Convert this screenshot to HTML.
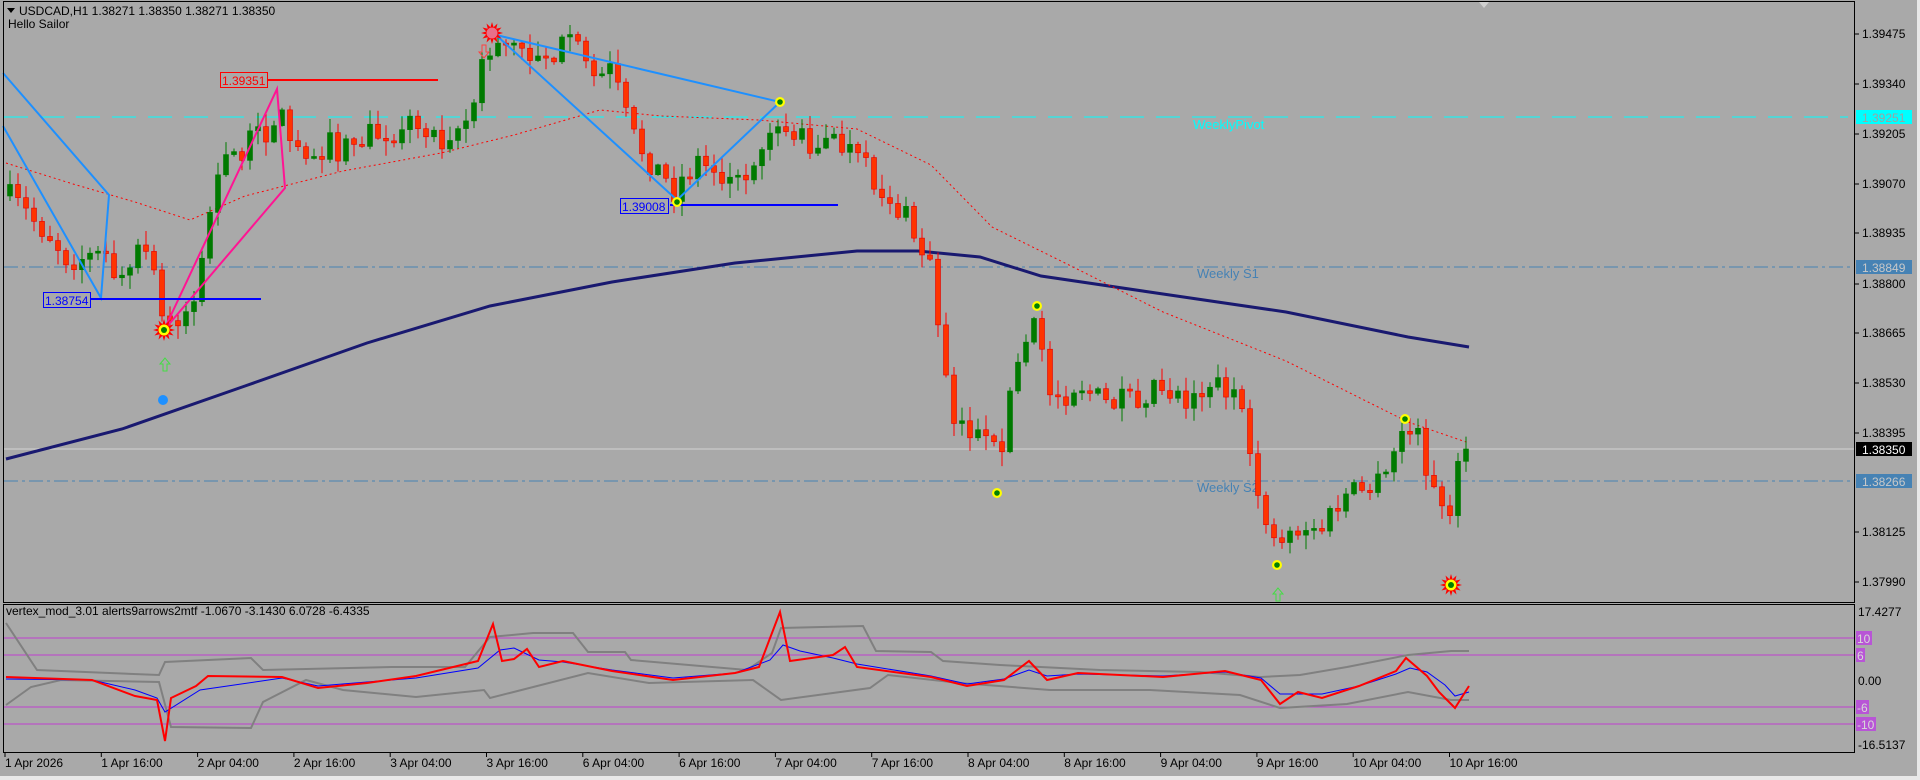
<!DOCTYPE html>
<html><head><meta charset="utf-8"><style>
html,body{margin:0;padding:0;background:#a9a9a9;overflow:hidden}
svg{display:block}
text{font-family:"Liberation Sans",sans-serif}
</style></head><body>
<svg id="s" width="1920" height="780" xmlns="http://www.w3.org/2000/svg">
<rect x="0" y="0" width="1920" height="780" fill="#a9a9a9"/>
<rect x="1917" y="0" width="3" height="780" fill="#e8e8e8"/>
<rect x="0" y="776" width="1920" height="4" fill="#e8e8e8"/>
<g id="lines"></g>
<g id="cand"></g>
<g id="over"></g>
<rect x="3.5" y="1.5" width="1851" height="601" fill="none" stroke="#000" stroke-width="1"/>
<rect x="3.5" y="604.5" width="1851" height="148" fill="none" stroke="#000" stroke-width="1"/>
<polygon points="1479,2 1489,2 1484,8" fill="#d0d0d0"/>
<polygon points="7,8 15,8 11,13" fill="#000"/>
<text x="19" y="15" font-size="12" fill="#000">USDCAD,H1  1.38271 1.38350 1.38271 1.38350</text>
<text x="8" y="28" font-size="12" fill="#000">Hello Sailor</text>
<text x="6" y="615" font-size="12" fill="#000">vertex_mod_3.01 alerts9arrows2mtf -1.0670 -3.1430 6.0728 -6.4335</text>
<g font-size="12" fill="#000" id="axis"></g>
</svg>
<script>
(function(){
var NS="http://www.w3.org/2000/svg";
function el(p,t,a){var e=document.createElementNS(NS,t);for(var k in a)e.setAttribute(k,a[k]);p.appendChild(e);return e;}
function txt(p,x,y,s,a){var e=el(p,'text',Object.assign({x:x,y:y},a||{}));e.textContent=s;return e;}
var L=document.getElementById('lines'),C=document.getElementById('cand'),O=document.getElementById('over'),A=document.getElementById('axis');
function pl(p,pts,a){el(p,'polyline',Object.assign({points:pts.map(function(q){return q.join(',')}).join(' '),fill:'none'},a));}
el(L,'line',{x1:4,y1:117,x2:1848,y2:117,stroke:'#00ffff','stroke-dasharray':'24,12'});
el(L,'line',{x1:4,y1:267,x2:1854,y2:267,stroke:'#4682b4','stroke-dasharray':'14,4,3,4'});
el(L,'line',{x1:4,y1:481,x2:1854,y2:481,stroke:'#4682b4','stroke-dasharray':'14,4,3,4'});
el(L,'line',{x1:4,y1:449,x2:1854,y2:449,stroke:'#d3d3d3'});
txt(L,1193,129,'WeeklyPivot',{'font-size':'13',fill:'#00ffff'});
txt(L,1197,278,'Weekly S1',{'font-size':'13',fill:'#4682b4'});
txt(L,1197,492,'Weekly S2',{'font-size':'13',fill:'#4682b4'});
[638,655,707,724].forEach(function(y){el(L,'line',{x1:4,y1:y,x2:1854,y2:y,stroke:'#c040d0'});});
var kp=[[6,196],[49,233],[67,257],[104,257],[122,282],[147,245],[163,325],[196,300],[214,184],[239,147],[263,135],[279,110],[294,147],[343,147],[404,122],[441,135],[471,116],[484,61],[496,47],[527,51],[576,49],[612,73],[631,135],[673,190],[698,159],[741,184],[771,122],[808,141],[845,147],[876,184],[906,220],[931,269],[943,355],[955,416],[980,441],[998,459],[1016,367],[1038,324],[1053,404],[1078,380],[1102,404],[1127,404],[1157,380],[1188,398],[1212,380],[1237,392],[1249,465],[1274,539],[1298,527],[1322,527],[1347,496],[1384,484],[1402,429],[1420,441],[1433,490],[1445,527],[1457,471],[1469,449]];
function interp(k,x){for(var i=1;i<k.length;i++){if(x<=k[i][0]){var a=k[i-1],b=k[i];return a[1]+(b[1]-a[1])*(x-a[0])/(b[0]-a[0]);}}return k[k.length-1][1];}
var seed=7;function rnd(){seed=(seed*16807)%2147483647;return (seed-1)/2147483646;}
var prev=interp(kp,6);
for(var x=10;x<=1469;x+=8){
 var c=interp(kp,x)+(rnd()-0.5)*30; if(x>=1465)c=449;
 var o=prev; if(Math.abs(c-o)<1.5)c=o+(rnd()<.5?-2:2);
 var bt=Math.min(o,c),bb=Math.max(o,c);
 var hi=bt-rnd()*14-1,lo=bb+rnd()*14+1;
 var bull=c<o;var col=bull?'#007a00':'#ff3300',bc=bull?'#007a00':'#e00000';
 el(C,'line',{x1:x,y1:hi,x2:x,y2:lo,stroke:bull?'#007a00':'#ff0000'});
 el(C,'rect',{x:x-2.5,y:bt,width:5,height:Math.max(1,bb-bt),fill:col,stroke:bc,'stroke-width':0.6});
 prev=c;
}
pl(L,[[6,459],[122,429],[245,386],[367,343],[490,306],[612,282],[735,263],[857,251],[918,251],[980,257],[1041,276],[1163,294],[1286,312],[1408,337],[1469,347]],{stroke:'#191970','stroke-width':3});
pl(L,[[6,163],[73,184],[135,202],[190,220],[245,196],[343,171],[441,153],[514,135],[600,110],[661,116],[759,120],[857,129],[931,165],[992,227],[1065,263],[1163,312],[1286,361],[1408,422],[1469,443]],{stroke:'#ff0000','stroke-dasharray':'2,3'});
pl(O,[[3,73],[109,195],[101,298],[3,126]],{stroke:'#1e90ff','stroke-width':2});
pl(O,[[496,35],[780,102],[677,200],[496,35]],{stroke:'#1e90ff','stroke-width':2});
pl(O,[[164,330],[277,89],[285,188],[164,330]],{stroke:'#ff1493','stroke-width':2});
el(O,'line',{x1:267,y1:80,x2:438,y2:80,stroke:'#ff0000','stroke-width':2});
el(O,'rect',{x:220.5,y:72.5,width:47,height:15,fill:'#a9a9a9',stroke:'#ff0000'});
txt(O,222,85,'1.39351',{'font-size':'12',fill:'#ff0000'});
el(O,'line',{x1:91,y1:299,x2:261,y2:299,stroke:'#0000ff','stroke-width':2});
el(O,'rect',{x:43.5,y:292.5,width:47,height:15,fill:'#a9a9a9',stroke:'#0000ff'});
txt(O,45,305,'1.38754',{'font-size':'12',fill:'#0000ff'});
el(O,'line',{x1:670,y1:205,x2:838,y2:205,stroke:'#0000ff','stroke-width':2});
el(O,'rect',{x:620.5,y:198.5,width:48,height:15,fill:'#a9a9a9',stroke:'#0000ff'});
txt(O,622,211,'1.39008',{'font-size':'12',fill:'#0000ff'});
function star(cx,cy,center){var p=[];for(var i=0;i<24;i++){var r=i%2?6:11,a=i*Math.PI/12;p.push([cx+r*Math.cos(a),cy+r*Math.sin(a)]);}
 el(O,'polygon',{points:p.map(function(q){return q.join(',')}).join(' '),fill:'#ff0000'});
 el(O,'circle',{cx:cx,cy:cy,r:5.5,fill:center});}
star(164,330,'#ffff00');el(O,'circle',{cx:164,cy:330,r:3,fill:'#008000'});
star(492,33,'#e8708a');
star(1451,585,'#ffff00');el(O,'circle',{cx:1451,cy:585,r:3,fill:'#008000'});
function ydot(cx,cy){el(O,'circle',{cx:cx,cy:cy,r:5,fill:'#ffff00'});el(O,'circle',{cx:cx,cy:cy,r:2.8,fill:'#008000'});}
[[780,102],[1037,306],[997,493],[1277,565],[1405,419],[677,202]].forEach(function(p){ydot(p[0],p[1]);});
el(O,'circle',{cx:163,cy:400,r:5,fill:'#1e90ff'});
function arrowUp(cx,cy,col){el(O,'path',{d:'M'+cx+','+(cy-7)+' l-5,6 h3 v7 h4 v-7 h3 z',fill:'none',stroke:col});}
arrowUp(165,365,'#44dd44');arrowUp(1278,595,'#44dd44');
el(O,'path',{d:'M484,58 l-5,-6 h3 v-7 h4 v7 h3 z',fill:'none',stroke:'#ff4040'});
pl(L,[[6,623],[37,670],[159,675],[165,662],[251,658],[263,670],[392,667],[465,667],[490,637],[533,633],[573,633],[588,652],[625,652],[631,660],[747,670],[772,653],[781,628],[863,626],[876,651],[931,652],[943,661],[1000,665],[1100,670],[1200,672],[1261,677],[1300,675],[1347,667],[1408,655],[1451,651],[1469,651]],{stroke:'#808080','stroke-width':2});
pl(L,[[6,705],[31,687],[61,680],[159,682],[171,727],[251,728],[263,702],[306,680],[343,690],[416,697],[484,690],[490,698],[588,673],[649,683],[753,680],[781,700],[870,688],[888,675],[960,683],[1050,690],[1150,690],[1240,695],[1280,708],[1347,704],[1408,692],[1451,700],[1469,700]],{stroke:'#808080','stroke-width':2});
pl(L,[[6,679],[92,680],[135,690],[157,698],[165,712],[200,690],[282,678],[318,686],[367,682],[416,678],[478,668],[500,650],[514,648],[539,660],[563,662],[612,670],[673,678],[735,673],[770,660],[783,645],[800,651],[833,658],[857,664],[931,676],[967,684],[1004,679],[1029,670],[1047,676],[1078,674],[1163,676],[1225,672],[1261,678],[1280,694],[1298,694],[1322,694],[1359,686],[1396,674],[1410,668],[1427,672],[1445,685],[1455,696],[1469,692]],{stroke:'#0000ff','stroke-width':1});
pl(L,[[6,677],[92,680],[135,696],[157,700],[165,741],[171,698],[196,686],[208,676],[282,677],[318,688],[367,683],[416,676],[478,661],[493,624],[502,661],[514,659],[527,649],[539,667],[563,661],[612,671],[673,680],[735,673],[759,667],[780,612],[790,661],[833,655],[845,647],[857,667],[931,677],[967,686],[1004,680],[1029,661],[1047,680],[1078,673],[1163,677],[1225,671],[1261,680],[1280,704],[1298,692],[1322,698],[1359,686],[1396,671],[1406,658],[1427,676],[1439,692],[1455,708],[1469,686]],{stroke:'#ff0000','stroke-width':2});
[[34,'1.39475'],[84,'1.39340'],[134,'1.39205'],[184,'1.39070'],[233,'1.38935'],[284,'1.38800'],[333,'1.38665'],[383,'1.38530'],[433,'1.38395'],[532,'1.38125'],[582,'1.37990']].forEach(function(a){el(A,'line',{x1:1855,y1:a[0],x2:1859,y2:a[0],stroke:'#000'});txt(A,1862,a[0]+4,a[1]);});
function box(y,bg,fg,s,w){el(A,'rect',{x:1856,y:y-7,width:w||56,height:14,fill:bg});txt(A,1862,y+5,s,{fill:fg});}
box(117,'#00ffff','#a0a0a0','1.39251');box(267,'#4682b4','#c8c8c8','1.38849');box(449,'#000','#fff','1.38350');box(481,'#4682b4','#c8c8c8','1.38266');
txt(A,1858,616,'17.4277');txt(A,1858,685,'0.00');txt(A,1858,749,'-16.5137');
function mb(y,s,w){el(A,'rect',{x:1856,y:y-7,width:w,height:14,fill:'#b855d6'});txt(A,1857,y+5,s,{fill:'#d8d8d8'});}
mb(638,'10',16);mb(655,'6',9);mb(707,'-6',13);mb(724,'-10',20);
['1 Apr 2026','1 Apr 16:00','2 Apr 04:00','2 Apr 16:00','3 Apr 04:00','3 Apr 16:00','6 Apr 04:00','6 Apr 16:00','7 Apr 04:00','7 Apr 16:00','8 Apr 04:00','8 Apr 16:00','9 Apr 04:00','9 Apr 16:00','10 Apr 04:00','10 Apr 16:00'].forEach(function(s,i){var x=5+i*96.3;el(A,'line',{x1:x,y1:753,x2:x,y2:757,stroke:'#000'});txt(A,x,767,s);});
})();
</script>
</body></html>
